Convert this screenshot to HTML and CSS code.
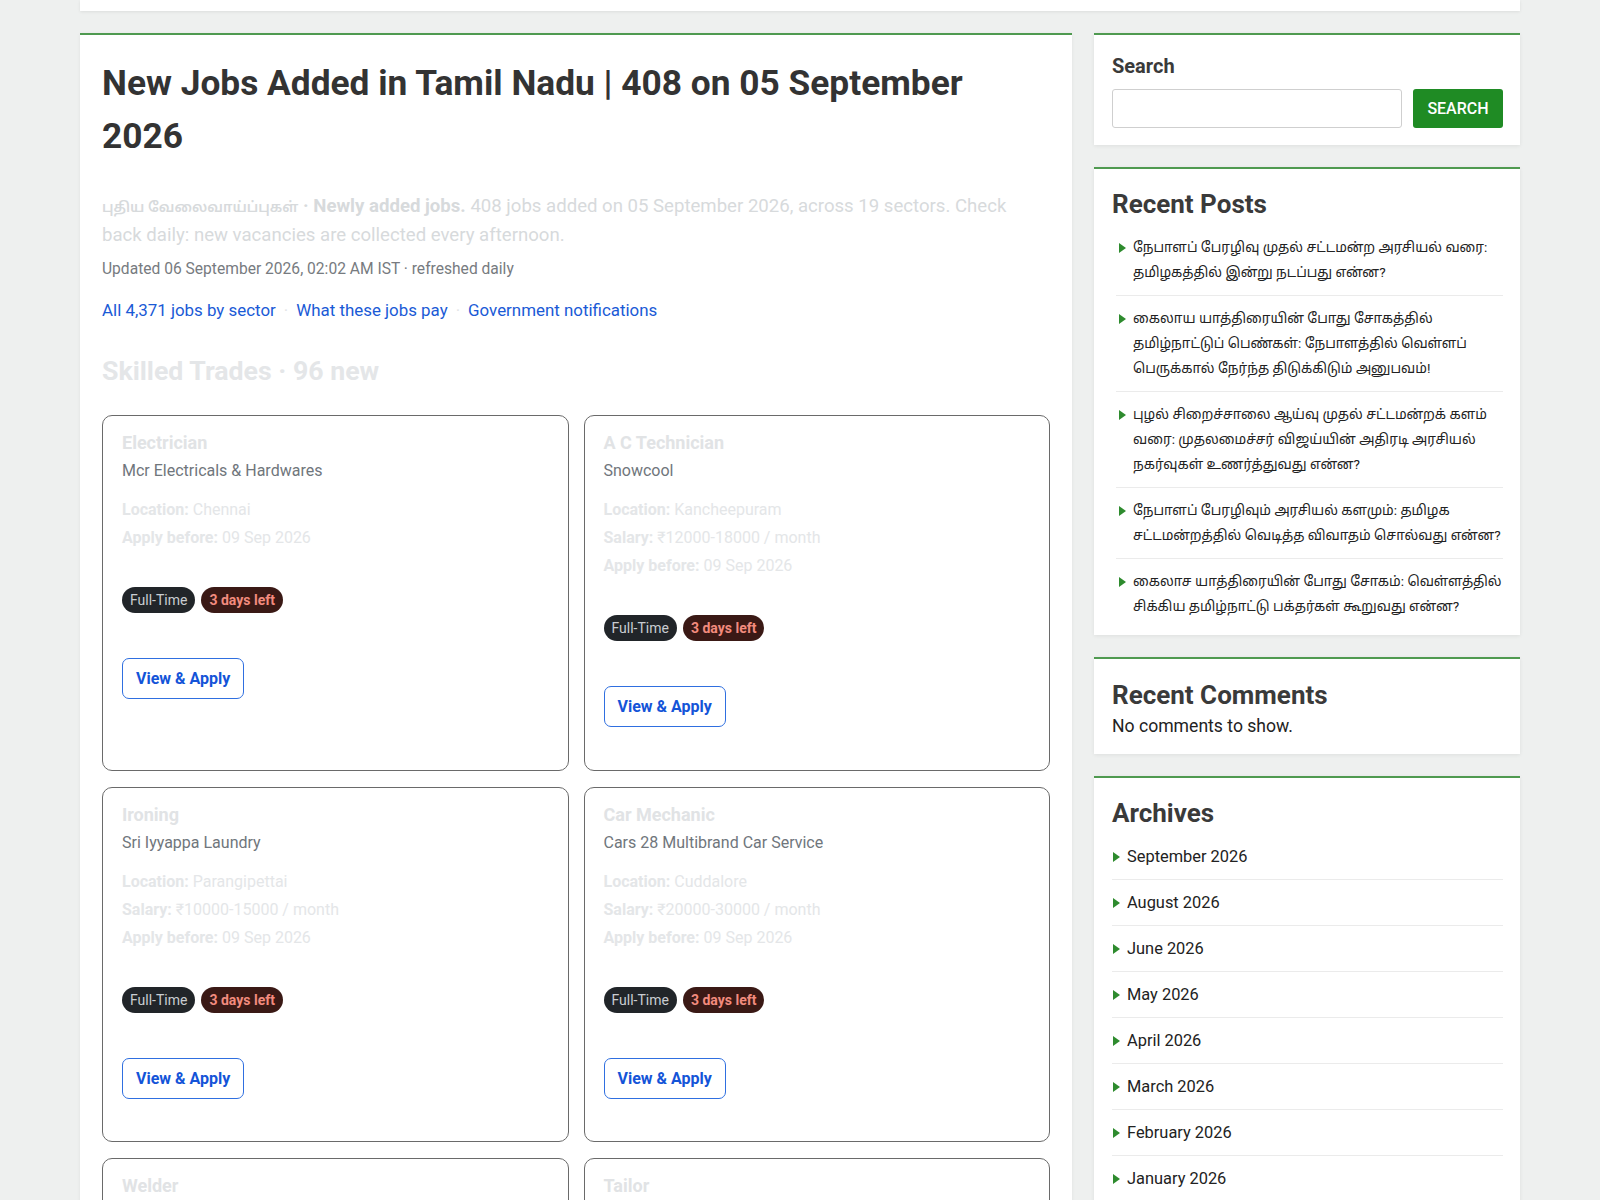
FILE: index.html
```html
<!DOCTYPE html>
<html lang="ta">
<head>
<meta charset="utf-8">
<title>New Jobs Added in Tamil Nadu | 408 on 05 September 2026</title>
<link rel="stylesheet" href="styles.css">
</head>
<body>
<div class="topbar"></div>
<div class="page">
  <main class="main-card">
    <h1 class="page-title">New Jobs Added in Tamil Nadu | 408 on 05 September 2026</h1>
    <p class="intro"><strong><span class="ta">புதிய வேலைவாய்ப்புகள்</span> · Newly added jobs.</strong> 408 jobs added on 05 September 2026, across 19 sectors. Check back daily: new vacancies are collected every afternoon.</p>
    <p class="updated">Updated 06 September 2026, 02:02 AM IST · refreshed daily</p>
    <nav class="quick-links">
      <a href="#">All 4,371 jobs by sector</a><span class="sep">·</span><a href="#">What these jobs pay</a><span class="sep">·</span><a href="#">Government notifications</a>
    </nav>
    <h2 class="sector">Skilled Trades · 96 new</h2>
    <div class="job-grid">
      <article class="job-card">
        <h3 class="job-title">Electrician</h3>
        <div class="company">Mcr Electricals &amp; Hardwares</div>
        <div class="job-info">
          <div><b>Location:</b> Chennai</div>
          <div><b>Apply before:</b> 09 Sep 2026</div>
        </div>
        <div class="badges"><span class="badge badge-type">Full-Time</span><span class="badge badge-days">3 days left</span></div>
        <a class="apply-btn" href="#">View &amp; Apply</a>
      </article>
      <article class="job-card">
        <h3 class="job-title">A C Technician</h3>
        <div class="company">Snowcool</div>
        <div class="job-info">
          <div><b>Location:</b> Kancheepuram</div>
          <div><b>Salary:</b> ₹12000-18000 / month</div>
          <div><b>Apply before:</b> 09 Sep 2026</div>
        </div>
        <div class="badges"><span class="badge badge-type">Full-Time</span><span class="badge badge-days">3 days left</span></div>
        <a class="apply-btn" href="#">View &amp; Apply</a>
      </article>
      <article class="job-card">
        <h3 class="job-title">Ironing</h3>
        <div class="company">Sri Iyyappa Laundry</div>
        <div class="job-info">
          <div><b>Location:</b> Parangipettai</div>
          <div><b>Salary:</b> ₹10000-15000 / month</div>
          <div><b>Apply before:</b> 09 Sep 2026</div>
        </div>
        <div class="badges"><span class="badge badge-type">Full-Time</span><span class="badge badge-days">3 days left</span></div>
        <a class="apply-btn" href="#">View &amp; Apply</a>
      </article>
      <article class="job-card">
        <h3 class="job-title">Car Mechanic</h3>
        <div class="company">Cars 28 Multibrand Car Service</div>
        <div class="job-info">
          <div><b>Location:</b> Cuddalore</div>
          <div><b>Salary:</b> ₹20000-30000 / month</div>
          <div><b>Apply before:</b> 09 Sep 2026</div>
        </div>
        <div class="badges"><span class="badge badge-type">Full-Time</span><span class="badge badge-days">3 days left</span></div>
        <a class="apply-btn" href="#">View &amp; Apply</a>
      </article>
      <article class="job-card">
        <h3 class="job-title">Welder</h3>
        <div class="company">Sri Murugan Engineering Works</div>
        <div class="job-info">
          <div><b>Location:</b> Coimbatore</div>
          <div><b>Salary:</b> ₹15000-22000 / month</div>
          <div><b>Apply before:</b> 09 Sep 2026</div>
        </div>
        <div class="badges"><span class="badge badge-type">Full-Time</span><span class="badge badge-days">3 days left</span></div>
        <a class="apply-btn" href="#">View &amp; Apply</a>
      </article>
      <article class="job-card">
        <h3 class="job-title">Tailor</h3>
        <div class="company">Kavya Garments</div>
        <div class="job-info">
          <div><b>Location:</b> Tiruppur</div>
          <div><b>Salary:</b> ₹12000-16000 / month</div>
          <div><b>Apply before:</b> 09 Sep 2026</div>
        </div>
        <div class="badges"><span class="badge badge-type">Full-Time</span><span class="badge badge-days">3 days left</span></div>
        <a class="apply-btn" href="#">View &amp; Apply</a>
      </article>
    </div>
  </main>

  <aside class="sidebar">
    <section class="widget widget-search">
      <label class="search-label" for="s">Search</label>
      <form class="search-row">
        <input class="search-input" id="s" type="text">
        <button class="search-btn" type="button">SEARCH</button>
      </form>
    </section>

    <section class="widget">
      <h2 class="widget-title">Recent Posts</h2>
      <ul class="post-list">
        <li><a href="#">நேபாளப் பேரழிவு முதல் சட்டமன்ற அரசியல் வரை: தமிழகத்தில் இன்று நடப்பது என்ன?</a></li>
        <li><a href="#">கைலாய யாத்திரையின் போது சோகத்தில் தமிழ்நாட்டுப் பெண்கள்: நேபாளத்தில் வெள்ளப் பெருக்கால் நேர்ந்த திடுக்கிடும் அனுபவம்!</a></li>
        <li><a href="#">புழல் சிறைச்சாலை ஆய்வு முதல் சட்டமன்றக் களம் வரை: முதலமைச்சர் விஜய்யின் அதிரடி அரசியல் நகர்வுகள் உணர்த்துவது என்ன?</a></li>
        <li><a href="#">நேபாளப் பேரழிவும் அரசியல் களமும்: தமிழக சட்டமன்றத்தில் வெடித்த விவாதம் சொல்வது என்ன?</a></li>
        <li><a href="#">கைலாச யாத்திரையின் போது சோகம்: வெள்ளத்தில் சிக்கிய தமிழ்நாட்டு பக்தர்கள் கூறுவது என்ன?</a></li>
      </ul>
    </section>

    <section class="widget widget-comments">
      <h2 class="widget-title">Recent Comments</h2>
      <p class="no-comments">No comments to show.</p>
    </section>

    <section class="widget">
      <h2 class="widget-title">Archives</h2>
      <ul class="archive-list">
        <li><a href="#">September 2026</a></li>
        <li><a href="#">August 2026</a></li>
        <li><a href="#">June 2026</a></li>
        <li><a href="#">May 2026</a></li>
        <li><a href="#">April 2026</a></li>
        <li><a href="#">March 2026</a></li>
        <li><a href="#">February 2026</a></li>
        <li><a href="#">January 2026</a></li>
        <li><a href="#">December 2025</a></li>
      </ul>
    </section>
  </aside>
</div>
</body>
</html>
```

FILE: styles.css
```css
* { box-sizing: border-box; }

html, body {
  margin: 0;
  padding: 0;
}

body {
  background: #eef0ef;
  font-family: Roboto, "Noto Sans Tamil", "Lohit Tamil", "Noto Sans", "DejaVu Sans", sans-serif;
  color: #222;
}

a { text-decoration: none; }

.topbar {
  width: 1440px;
  height: 11px;
  margin: 0 auto;
  background: #fff;
  box-shadow: 0 1px 3px rgba(0, 0, 0, 0.08);
}

.page {
  width: 1440px;
  margin: 22px auto 0;
  display: grid;
  grid-template-columns: 992px 426px;
  column-gap: 22px;
  align-items: start;
}

/* ---------- main card ---------- */
.main-card {
  background: #fff;
  border-top: 2px solid #4f9a50;
  padding: 22px 22px 30px;
  box-shadow: 0 1px 4px rgba(0, 0, 0, 0.06);
}

.page-title {
  margin: 0;
  max-width: 900px;
  font-size: 35.3px;
  line-height: 52.5px;
  font-weight: 700;
  color: #333;
}

.intro {
  margin: 30px 0 0;
  font-size: 18.6px;
  line-height: 28px;
  color: #d7dadc;
}

.intro strong { font-weight: 700; }

.intro .ta {
  font-size: 14.2px;
  font-weight: 600;
}

.updated {
  margin: 9px 0 0;
  font-size: 15.6px;
  line-height: 22.5px;
  color: #777b80;
}

.quick-links {
  margin-top: 17px;
  display: flex;
  align-items: center;
  font-size: 16.9px;
  line-height: 24px;
}

.quick-links a { color: #1a5ad6; }

.quick-links .sep {
  color: #e2e4e6;
  margin: 0 8px;
}

.sector {
  margin: 33px 0 0;
  font-size: 26.7px;
  line-height: 33.6px;
  font-weight: 700;
  color: #e4e6e8;
}

.job-grid {
  margin-top: 27px;
  display: grid;
  grid-template-columns: 1fr 1fr;
  gap: 16px 15px;
}

.job-card {
  border: 1px solid #6a6a6a;
  border-radius: 10px;
  padding: 16px 19px 42.5px;
  display: flex;
  flex-direction: column;
  align-items: flex-start;
}

.job-title {
  margin: 0;
  font-size: 18px;
  line-height: 22px;
  font-weight: 700;
  color: #e1e3e5;
}

.company {
  margin-top: 5px;
  font-size: 16px;
  line-height: 24px;
  color: #70767c;
}

.job-info {
  margin-top: 13px;
  font-size: 16px;
  line-height: 28px;
  color: #e4e6e8;
}

.job-info b { font-weight: 700; }

.badges {
  margin-top: 35px;
  display: flex;
  gap: 6px;
}

.badge {
  height: 26px;
  padding: 0 8px;
  border-radius: 13px;
  font-size: 14px;
  line-height: 26px;
}

.badge-type {
  background: #212529;
  color: #c9cdd1;
}

.badge-days {
  background: #3a1915;
  color: #f28b7e;
  font-weight: 700;
}

.apply-btn {
  margin-top: 45px;
  display: inline-block;
  height: 41px;
  padding: 8px 13px;
  border: 1px solid #2f6fe0;
  border-radius: 7px;
  color: #1454d8;
  font-size: 16px;
  line-height: 23px;
  font-weight: 700;
}

/* ---------- sidebar ---------- */
.sidebar {
  display: flex;
  flex-direction: column;
  gap: 22px;
}

.widget {
  background: #fff;
  border-top: 2px solid #4f9a50;
  padding: 20px 17px 16px 18px;
  box-shadow: 0 1px 4px rgba(0, 0, 0, 0.07);
}

.widget-search { padding: 19px 17px 17px 18px; }

.widget-comments { padding: 21px 17px 14px 18px; }

.search-label {
  display: block;
  font-size: 20px;
  line-height: 24px;
  font-weight: 700;
  color: #3a3a3a;
}

.search-row {
  margin: 11px 0 0;
  display: flex;
  gap: 11px;
}

.search-input {
  flex: 1;
  height: 39px;
  border: 1px solid #cfcfcf;
  border-radius: 3px;
  background: #fff;
  margin: 0;
}

.search-btn {
  width: 90px;
  height: 39px;
  border: 0;
  border-radius: 3px;
  background: #1f8b24;
  color: #fff;
  font-family: Roboto, sans-serif;
  font-size: 16px;
  font-weight: 500;
  margin: 0;
  padding: 0;
}

.widget-title {
  margin: 0;
  font-size: 26px;
  line-height: 31.2px;
  font-weight: 700;
  color: #3a3a3a;
}

.post-list,
.archive-list {
  list-style: none;
  margin: 5px 0 0;
  padding: 0;
}

.post-list { margin-left: 4px; }

.post-list li,
.archive-list li {
  display: flex;
  padding: 10px 0;
  border-bottom: 1px solid #ebebeb;
  line-height: 25px;
}

.post-list li:last-child,
.archive-list li:last-child {
  border-bottom: 0;
  padding-bottom: 0;
}

.post-list li::before,
.archive-list li::before {
  content: "";
  flex: none;
  width: 0;
  height: 0;
  border-left: 7px solid #2e8b2e;
  border-top: 5px solid transparent;
  border-bottom: 5px solid transparent;
  margin-top: 7.5px;
}

.post-list li::before { margin-left: 3px; margin-right: 7px; }
.archive-list li::before { margin-left: 1px; margin-right: 7px; }

.post-list a {
  color: #222;
  font-size: 13.6px;
}

.archive-list a {
  color: #222;
  font-size: 16.4px;
}

.no-comments {
  margin: 2px 0 0;
  font-size: 17.6px;
  line-height: 26.4px;
  color: #222;
}
```
